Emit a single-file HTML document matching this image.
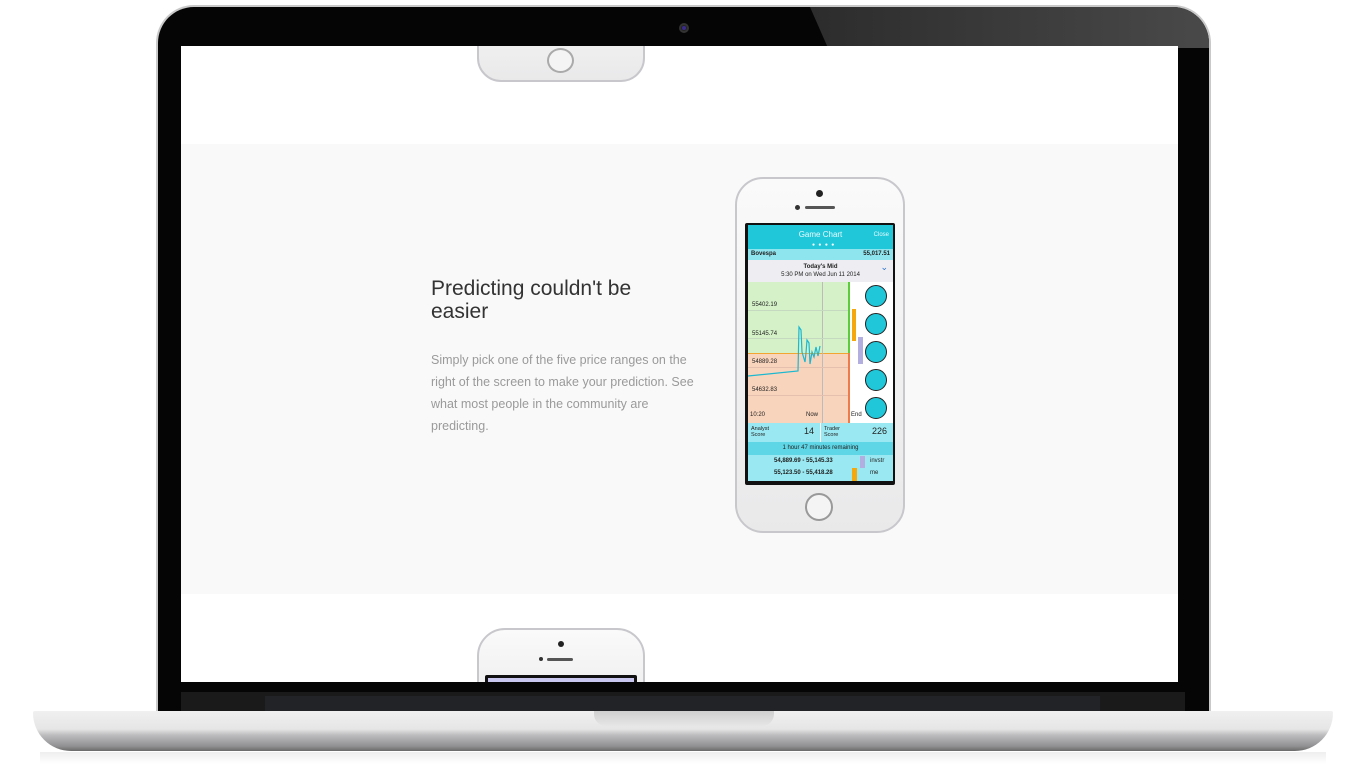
<!DOCTYPE html>
<html><head><meta charset="utf-8"><style>
*{margin:0;padding:0;box-sizing:border-box}
body{width:1366px;height:767px;background:#fff;position:relative;overflow:hidden;font-family:"Liberation Sans",Arial,sans-serif}
.abs{position:absolute}
.lid{left:156px;top:5px;width:1055px;height:712px;background:#050505;border-radius:38px 38px 0 0;border:2px solid #c9c9c9;border-bottom:none;overflow:hidden}
.glare{left:652px;top:0;width:410px;height:41px;background:linear-gradient(90deg,#2c2c2c,#4a4a4a);clip-path:polygon(0 0,100% 0,100% 100%,18px 100%)}
.screen{left:181px;top:46px;width:997px;height:636px;background:#fff;overflow:hidden}
.gray{left:0;top:98px;width:997px;height:450px;background:#f9f9f9}
.phone{background:linear-gradient(180deg,#fafafa,#e9e9ea);border:2px solid #c8c8cc;border-radius:28px}
.hbtn{border:2px solid #999;border-radius:50%;background:#f4f4f4}
.base{left:33px;top:711px;width:1300px;height:40px;background:linear-gradient(180deg,#f0f0f0 0%,#e6e6e6 45%,#bdbdbf 60%,#909092 88%,#6a6a6a 100%);border-radius:2px 2px 40px 40px}
.notch{left:594px;top:711px;width:180px;height:15px;background:linear-gradient(180deg,#cfcfcf,#e6e6e6);border-radius:0 0 12px 12px}
.hinge{left:181px;top:692px;width:1004px;height:19px;background:#1a1a1b}
.ps{font-size:7px;color:#222}
</style></head><body>
<div class="abs lid"><div class="abs glare"></div></div>
<div class="abs" style="left:679px;top:23px;width:10px;height:10px;border-radius:50%;background:#222;border:2px solid #333"><div style="margin:1px;width:4px;height:4px;border-radius:50%;background:#3a2a8a"></div></div>
<div class="abs hinge"></div>
<div class="abs" style="left:265px;top:696px;width:835px;height:15px;background:#222326"></div>
<div class="abs screen">
  <div class="abs phone" style="left:296px;top:-60px;width:168px;height:96px;border-radius:24px"></div>
  <div class="abs hbtn" style="left:366px;top:2px;width:27px;height:25px;border-color:#aaa"></div>
  <div class="abs gray"></div>
  <div class="abs" style="left:250px;top:231px;font-size:21px;line-height:23px;color:#333">Predicting couldn't be<br>easier</div>
  <div class="abs" style="left:250px;top:303px;width:270px;font-size:12.5px;line-height:22px;color:#9a9a9a">Simply pick one of the five price ranges on the right of the screen to make your prediction. See what most people in the community are predicting.</div>
  <div class="abs phone" style="left:554px;top:131px;width:170px;height:356px"></div>
  <div class="abs" style="left:635px;top:144px;width:7px;height:7px;border-radius:50%;background:#222"></div>
  <div class="abs" style="left:614px;top:159px;width:5px;height:5px;border-radius:50%;background:#333"></div>
  <div class="abs" style="left:624px;top:160px;width:30px;height:3px;border-radius:2px;background:#555"></div>
  <div class="abs hbtn" style="left:624px;top:447px;width:28px;height:28px"></div>
  <div class="abs" style="left:564px;top:177px;width:150px;height:262px;background:#111;border-radius:2px"></div>
  <div class="abs" style="left:567px;top:179px;width:145px;height:256px;background:#fff;overflow:hidden">
    <div class="abs" style="left:0;top:0;width:145px;height:24px;background:#20c7d9;color:#e8fbff;font-size:8px;text-align:center;line-height:20px">Game Chart<span style="position:absolute;right:4px;font-size:6px">Close</span></div>
    <div class="abs" style="left:64px;top:17px;font-size:5px;color:#fff;letter-spacing:1px">● ● ● ●</div>
    <div class="abs ps" style="left:0;top:24px;width:145px;height:11px;background:#8fe5ee;font-weight:bold;font-size:6px;line-height:11px;padding:0 3px">Bovespa<span style="float:right">55,017.51</span></div>
    <div class="abs ps" style="left:0;top:35px;width:145px;height:22px;background:#eeeef2;text-align:center;font-size:6px;line-height:8px;padding-top:3px"><b>Today's Mid</b><br>5:30 PM on Wed Jun 11 2014<span style="position:absolute;right:5px;top:3px;color:#2a6fd0;font-size:9px">⌄</span></div>
    <div class="abs" style="left:0;top:57px;width:100px;height:71px;background:#d4f1c8"></div>
    <div class="abs" style="left:0;top:128px;width:100px;height:70px;background:#f9d4bc"></div>
    <div class="abs" style="left:100px;top:57px;width:2px;height:71px;background:#5ccc3c"></div>
    <div class="abs" style="left:100px;top:128px;width:2px;height:70px;background:#ee7c4a"></div>
    <div class="abs" style="left:0;top:128px;width:100px;height:1px;background:#f2a530"></div>
    <div class="abs" style="left:74px;top:57px;width:1px;height:141px;background:#bbb"></div>
    <div class="abs" style="left:0;top:85px;width:100px;height:1px;background:#c5d8c0"></div>
    <div class="abs" style="left:0;top:113px;width:100px;height:1px;background:#c5d8c0"></div>
    <div class="abs" style="left:0;top:142px;width:100px;height:1px;background:#e5c0ae"></div>
    <div class="abs" style="left:0;top:170px;width:100px;height:1px;background:#e5c0ae"></div>
    <div class="abs ps" style="left:4px;top:77px;font-size:6px">55402.19</div>
    <div class="abs ps" style="left:4px;top:106px;font-size:6px">55145.74</div>
    <div class="abs ps" style="left:4px;top:134px;font-size:6px">54889.28</div>
    <div class="abs ps" style="left:4px;top:162px;font-size:6px">54632.83</div>
    <div class="abs ps" style="left:2px;top:187px;font-size:6px">10:20</div>
    <div class="abs ps" style="left:58px;top:187px;font-size:6px">Now</div>
    <div class="abs ps" style="left:103px;top:187px;font-size:6px;z-index:2">End</div>
    <svg class="abs" style="left:0;top:57px" width="100" height="141"><polyline fill="none" stroke="#1bb8d0" stroke-width="1.2" points="0,94 50,89 51,45 53,48 54,70 57,80 58,71 59,58 61,61 62,82 64,70 66,75 68,65 70,74 72,64"/></svg>
    <div class="abs" style="left:102px;top:57px;width:43px;height:141px;background:#fff"></div>
    <div class="abs" style="left:104px;top:84px;width:4px;height:32px;background:#f5a70e"></div>
    <div class="abs" style="left:110px;top:112px;width:5px;height:27px;background:#b3aee0"></div>
    <div class="abs" style="left:117px;top:60px;width:22px;height:22px;border-radius:50%;background:#20c7d9;border:1.5px solid #222"></div>
    <div class="abs" style="left:117px;top:88px;width:22px;height:22px;border-radius:50%;background:#20c7d9;border:1.5px solid #222"></div>
    <div class="abs" style="left:117px;top:116px;width:22px;height:22px;border-radius:50%;background:#20c7d9;border:1.5px solid #222"></div>
    <div class="abs" style="left:117px;top:144px;width:22px;height:22px;border-radius:50%;background:#20c7d9;border:1.5px solid #222"></div>
    <div class="abs" style="left:117px;top:172px;width:22px;height:22px;border-radius:50%;background:#20c7d9;border:1.5px solid #222"></div>
    <div class="abs ps" style="left:0;top:198px;width:145px;height:19px;background:#9ae8f1;font-size:5.5px;line-height:6px">
      <span class="abs" style="left:3px;top:3px">Analyst<br>Score</span><span class="abs" style="left:56px;top:5px;font-size:9px">14</span>
      <span class="abs" style="left:72px;top:0;width:1px;height:19px;background:#fff"></span>
      <span class="abs" style="left:76px;top:3px">Trader<br>Score</span><span class="abs" style="left:124px;top:5px;font-size:9px">226</span></div>
    <div class="abs ps" style="left:0;top:217px;width:145px;height:13px;background:#5ed6e6;text-align:center;font-size:6px;line-height:13px">1 hour 47 minutes remaining</div>
    <div class="abs ps" style="left:0;top:230px;width:145px;height:26px;background:#9ae8f1;font-size:6px;font-weight:bold">
      <span class="abs" style="left:26px;top:3px">54,889.69 - 55,145.33</span><span class="abs" style="left:112px;top:1px;width:5px;height:12px;background:#b3aee0"></span><span class="abs" style="left:122px;top:3px;font-weight:normal">invstr</span>
      <span class="abs" style="left:26px;top:15px">55,123.50 - 55,418.28</span><span class="abs" style="left:104px;top:13px;width:5px;height:13px;background:#f5a70e"></span><span class="abs" style="left:122px;top:15px;font-weight:normal">me</span></div>
  </div>
  <div class="abs phone" style="left:296px;top:582px;width:168px;height:100px"></div>
  <div class="abs" style="left:377px;top:595px;width:6px;height:6px;border-radius:50%;background:#222"></div>
  <div class="abs" style="left:358px;top:611px;width:4px;height:4px;border-radius:50%;background:#333"></div>
  <div class="abs" style="left:366px;top:612px;width:26px;height:3px;border-radius:2px;background:#555"></div>
  <div class="abs" style="left:304px;top:629px;width:152px;height:10px;background:#111;border-radius:2px"></div>
  <div class="abs" style="left:307px;top:632px;width:146px;height:7px;background:#c9c7f0"></div>
</div>
<div class="abs base"></div>
<div class="abs notch"></div>
<div class="abs" style="left:40px;top:752px;width:1286px;height:12px;background:linear-gradient(180deg,#eee,#fff)"></div>
</body></html>
